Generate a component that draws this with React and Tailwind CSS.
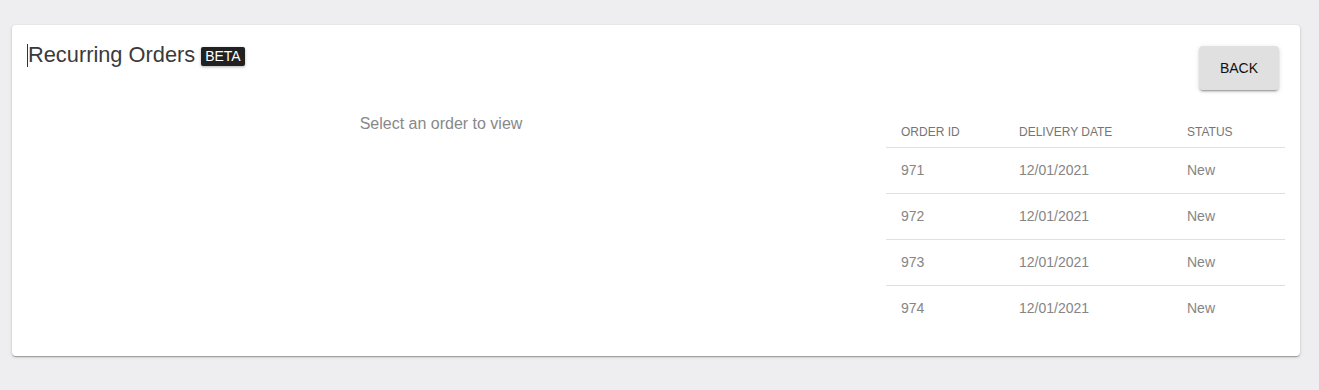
import React from 'react';

const orders = [
  { id: 971, date: '12/01/2021', status: 'New' },
  { id: 972, date: '12/01/2021', status: 'New' },
  { id: 973, date: '12/01/2021', status: 'New' },
  { id: 974, date: '12/01/2021', status: 'New' },
];

function OrdersTable() {
  return (
    <div className="w-[399px] mt-[27px] mr-[15px] text-[14px]">
      {/* header */}
      <div className="grid grid-cols-[118px_168px_1fr] h-[31px] items-center border-b border-[#e0e0e0] text-[12px] text-[#757575]">
        <div className="pl-[15px]">ORDER ID</div>
        <div className="pl-[15px]">DELIVERY DATE</div>
        <div className="pl-[15px]">STATUS</div>
      </div>
      {orders.map((o, i) => (
        <div
          key={o.id}
          className={
            i < orders.length - 1
              ? 'grid grid-cols-[118px_168px_1fr] h-[46px] items-center border-b border-[#e0e0e0] text-[#858585]'
              : 'grid grid-cols-[118px_168px_1fr] h-[45px] items-center text-[#858585]'
          }
        >
          <div className="pl-[15px]">{o.id}</div>
          <div className="pl-[15px]">{o.date}</div>
          <div className="pl-[15px]">{o.status}</div>
        </div>
      ))}
    </div>
  );
}

export default function App() {
  return (
    <div
      className="min-h-[390px] bg-[#eeeef0] pl-[12px] pr-[19px] pt-[25px] pb-[34px]"
      style={{ fontFamily: '"Liberation Sans", Arial, sans-serif' }}
    >
      <div className="bg-white rounded-[4px] shadow-[0_1px_3px_rgba(0,0,0,0.2),0_1px_1px_rgba(0,0,0,0.14),0_2px_1px_-1px_rgba(0,0,0,0.12)] pb-[25px]">
        {/* top row */}
        <div className="flex items-start justify-between pl-[15px]">
          <div className="mt-[15px] flex items-center h-[30px]">
            <span className="w-px h-[23px] bg-[#333]"></span>
            <h1 className="text-[21.8px] leading-[30px] text-[#3a3a3a] font-normal">Recurring Orders</h1>
            <span className="ml-[6px] mt-[2px] bg-[#212121] text-white text-[14px] leading-[19px] px-[4px] rounded-[2px] shadow-[0_1px_3px_rgba(0,0,0,0.3)]">
              BETA
            </span>
          </div>
          <button className="mt-[21px] mr-[21px] w-[80px] h-[44px] bg-[#e0e0e0] rounded-[4px] text-[14px] text-[#111] shadow-[0_3px_1px_-2px_rgba(0,0,0,0.2),0_2px_2px_0_rgba(0,0,0,0.14),0_1px_5px_0_rgba(0,0,0,0.12)]">
            BACK
          </button>
        </div>

        {/* content */}
        <div className="flex gap-[16px]">
          <div className="flex-1 text-center mt-[24px]">
            <p className="text-[16px] leading-[20px] text-[#888]">Select an order to view</p>
          </div>
          <OrdersTable />
        </div>
      </div>
    </div>
  );
}
